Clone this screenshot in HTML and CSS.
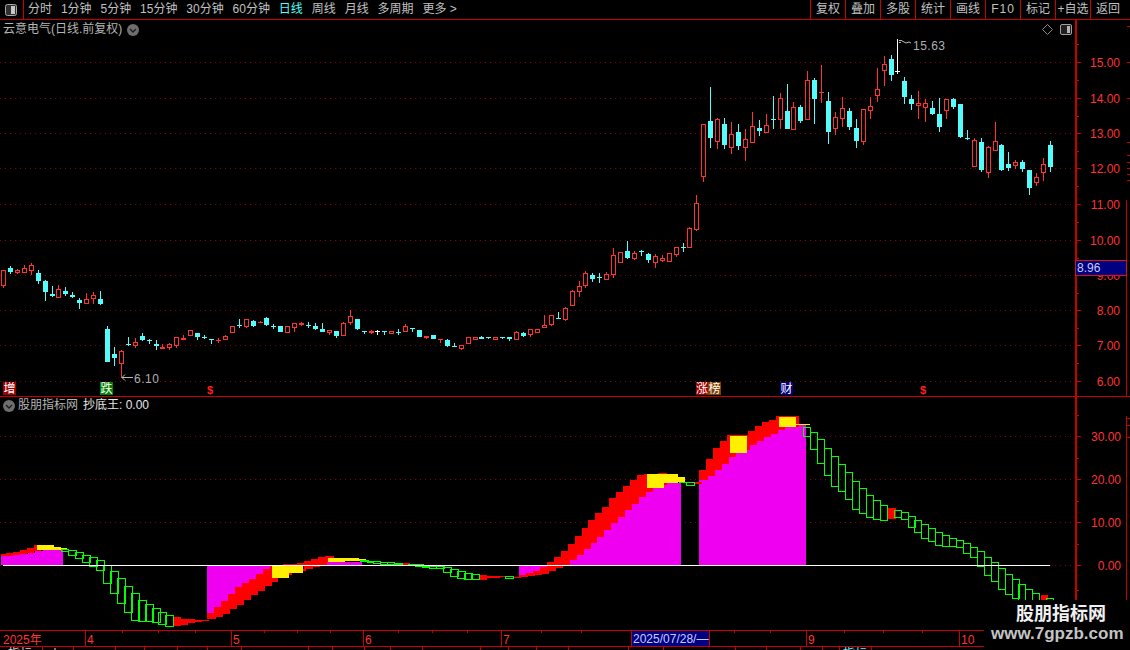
FILE: index.html
```html
<!DOCTYPE html>
<html lang="zh-CN">
<head>
<meta charset="utf-8">
<title>云意电气 K线</title>
<link rel="stylesheet" href="styles.css">
</head>
<body>
<div class="app">
  <header class="toolbar">
    <div class="layout-btn">
      <svg class="layout-icon" width="12" height="12" viewBox="0 0 12 12"><rect x="0.5" y="0.5" width="11" height="11" rx="2" fill="#303030" stroke="#a8a8a8"/><rect x="6" y="2" width="4" height="8" fill="#c8c8c8"/></svg>
    </div>
    <nav class="periods">
      <span>分时</span><span>1分钟</span><span>5分钟</span><span>15分钟</span><span>30分钟</span><span>60分钟</span><span class="active">日线</span><span>周线</span><span>月线</span><span>多周期</span><span>更多 &gt;</span>
    </nav>
    <nav class="tools">
      <span>复权</span><span>叠加</span><span>多股</span><span>统计</span><span>画线</span><span class="wide">F10</span><span>标记</span><span>+自选</span><span>返回</span>
    </nav>
  </header>

  <section class="pane pane-main">
    <svg id="main-chart" class="chart" width="1130" height="376" viewBox="0 20 1130 376"></svg>
    <div class="pane-title">
      <span class="stock">云意电气(日线.前复权)</span>
      <svg class="chev" width="12" height="12" viewBox="0 0 12 12"><circle cx="6" cy="6" r="6" fill="#6e6e6e"/><path d="M3 5l3 3 3-3" fill="none" stroke="#1c1c1c" stroke-width="1.4"/></svg>
    </div>
    <div class="pane-tools">
      <svg width="11" height="11" viewBox="0 0 11 11"><path d="M5.5 0.5l5 5-5 5-5-5z" fill="none" stroke="#8c8c8c"/></svg>
      <svg width="12" height="11" viewBox="0 0 12 11"><rect x="0.5" y="0.5" width="11" height="10" rx="1.5" fill="#202020" stroke="#a0a0a0"/><rect x="7" y="2" width="3" height="7" fill="#b4b4b4"/></svg>
    </div>
  </section>

  <section class="pane pane-sub">
    <svg id="sub-chart" class="chart" width="1130" height="233" viewBox="0 397 1130 233"></svg>
    <div class="pane-title sub-title">
      <svg class="chev" width="12" height="12" viewBox="0 0 12 12"><circle cx="6" cy="6" r="6" fill="#6e6e6e"/><path d="M3 5l3 3 3-3" fill="none" stroke="#1c1c1c" stroke-width="1.4"/></svg>
      <span class="stock">股朋指标网</span>
      <span class="value">抄底王: 0.00</span>
    </div>
  </section>

  <section class="date-axis">
    <svg id="date-chart" class="chart" width="1130" height="15" viewBox="0 631 1130 15"></svg>
  </section>

  <section class="tabs">
    <svg id="tab-chart" class="chart" width="1130" height="3" viewBox="0 647 1130 3"></svg>
  </section>

  <aside class="watermark">
    <div class="wm-name">股朋指标网</div>
    <div class="wm-url">www.7gpzb.com</div>
  </aside>
</div>
<script src="chart.js"></script>
</body>
</html>
```

FILE: styles.css
```css
* { box-sizing: border-box; }
html, body { margin: 0; padding: 0; background: #000; }
body {
  width: 1130px;
  height: 650px;
  overflow: hidden;
  font-family: "Liberation Sans", "Noto Sans CJK SC", sans-serif;
  font-size: 12px;
  color: #c0c0c0;
}
.app {
  position: relative;
  width: 1130px;
  height: 650px;
  overflow: hidden;
  display: flex;
  flex-direction: column;
  background: #000;
}
.toolbar {
  flex: none;
  height: 20px;
  display: flex;
  border-bottom: 1px solid #c80000;
  line-height: 19px;
  white-space: nowrap;
}
.layout-btn {
  flex: none;
  width: 24px;
  display: flex;
  align-items: center;
  justify-content: center;
  border-right: 1px solid #c80000;
  padding-right: 1px;
}
.periods {
  display: flex;
  gap: 8.9px;
  padding-left: 4px;
}
.periods .active { color: #54fcfc; }
.tools {
  margin-left: auto;
  display: flex;
  padding-right: 5px;
}
.tools span {
  width: 35px;
  text-align: center;
  border-left: 1px solid #c80000;
}
.tools .wide { letter-spacing: 1px; }
.pane { position: relative; flex: none; }
.pane-main { height: 377px; border-bottom: 1px solid #c80000; }
.pane-sub { height: 234px; border-bottom: 1px solid #c80000; }
.chart { display: block; }
.chart text { font-family: "Liberation Sans", "Noto Sans CJK SC", sans-serif; font-size: 12px; }
.chart .lab { fill: #ff3232; }
.chart .note { fill: #b0b0b0; letter-spacing: 0.5px; }
.chart .badge { fill: #fff; font-size: 12px; text-anchor: middle; }
.chart .dollar { fill: #ff2020; font-size: 11px; font-weight: bold; text-anchor: middle; }
.chart .last { fill: #c8ccff; }
.chart .tabtxt { fill: #d0d0d0; }
.chart .tabcur { fill: #54fcfc; }
.pane-title {
  position: absolute;
  left: 3px;
  top: 1px;
  display: flex;
  align-items: center;
  gap: 5px;
  height: 17px;
  line-height: 17px;
}
.stock { color: #b4b4b4; }
.sub-title { top: 0; left: 3px; gap: 3px; }
.sub-title .value { color: #e6e6e6; margin-left: 2px; }
.pane-tools {
  position: absolute;
  left: 1042px;
  top: 4px;
  display: flex;
  gap: 7px;
  align-items: center;
}
.date-axis { flex: none; height: 16px; border-bottom: 1px solid #c80000; }
.tabs { flex: none; height: 3px; overflow: hidden; }
.watermark {
  position: absolute;
  left: 984px;
  top: 600px;
  width: 146px;
  height: 50px;
  background: #000;
  text-align: center;
}
.wm-name {
  font-size: 18px;
  font-weight: bold;
  color: #f0f0f0;
  line-height: 20px;
  padding: 4px 0 0 32px;
  text-align: left;
}
.wm-url {
  font-size: 17px;
  font-weight: bold;
  color: #c4c4c4;
  line-height: 20px;
  padding-left: 7px;
  text-align: left;
}
```

FILE: chart.js
```js
(function () {
  var NS = "http://www.w3.org/2000/svg";
  function el(parent, tag, attrs, txt) {
    var e = document.createElementNS(NS, tag);
    for (var k in attrs) e.setAttribute(k, attrs[k]);
    if (txt != null) e.textContent = txt;
    parent.appendChild(e);
    return e;
  }
  function box(svg, x, y, w, h, fill) {
    el(svg, "rect", { x: x, y: y, width: w, height: h, fill: fill, "shape-rendering": "crispEdges" });
  }
  var FRAME = "#c80000", GRID = "#8c0000", RED = "#ff3232", CYAN = "#54fcfc";

  function grid(svg, y) {
    el(svg, "line", { x1: 0, x2: 1075, y1: y + 0.5, y2: y + 0.5, stroke: GRID, "stroke-dasharray": "1 4", "shape-rendering": "crispEdges" });
  }

  /* ------- main pane ------- */
  var main = document.getElementById("main-chart");
  var prices = [[15, 62], [14, 98], [13, 133], [12, 168], [11, 204], [10, 240], [9, 275], [8, 310], [7, 345], [6, 381]];
  prices.forEach(function (p) { grid(main, p[1]); });

  // type, body top, body bottom, high, low (pixels)
  var K = [
    ["r",270,286,270,288],["c",268,272,266,274],["r",270,273,269,274],["r",268,273,265,273],["r",265,271,263,275],
    ["c",273,281,270,284],["c",281,292,280,301],["c",294,296,286,297],["r",289,298,285,298],["c",291,294,287,296],
    ["c",295,297,292,298],["c",300,303,298,309],["r",299,304,293,304],["r",295,299,292,304],["c",299,304,291,305],
    ["c",329,362,326,362],["c",354,358,347,366],["r",351,364,350,378],["c",344,345,337,346],["r",342,346,338,348],
    ["c",336,340,333,341],["c",340,341,339,344],["c",344,346,340,350],["f",347,349,344,349],["r",344,348,343,350],
    ["r",337,346,337,348],["f",338,340,335,340],["r",330,336,330,336],["c",333,337,333,340],["c",337,338,335,339],
    ["c",339,340,339,344],["f",340,341,338,343],["r",336,340,335,340],["r",326,333,326,333],["c",325,326,319,328],
    ["r",319,327,319,328],["c",321,326,320,327],["f",322,323,321,323],["c",318,325,317,326],["c",326,327,324,329],
    ["c",326,332,326,332],["r",326,333,326,333],["r",323,328,323,332],["r",323,325,322,326],["c",325,326,322,328],
    ["c",326,329,323,330],["c",329,332,323,332],["r",330,333,330,335],["c",331,336,331,338],["r",323,336,322,336],
    ["r",316,323,310,325],["c",319,329,319,330],["c",331,332,331,334],["f",331,333,330,334],["w",331,332,330,335],
    ["c",331,332,331,335],["r",331,334,331,334],["c",332,333,329,335],["r",326,332,324,332],["c",328,329,328,332],
    ["c",330,337,330,337],["f",336,338,336,339],["c",335,339,335,339],["f",339,340,339,343],["c",340,346,339,347],
    ["c",346,347,343,347],["r",345,349,345,350],["r",337,344,337,344],["r",337,340,337,340],["c",337,339,336,339],
    ["c",337,338,337,339],["r",337,340,337,340],["c",337,338,337,339],["c",337,339,337,341],["r",332,340,331,340],
    ["c",333,336,332,337],["r",329,335,329,337],["r",329,333,329,333],["r",325,328,315,328],["r",315,325,315,326],
    ["c",318,319,312,319],["r",308,320,307,321],["r",291,306,290,306],["r",286,292,281,297],["r",273,286,271,288],
    ["c",275,279,273,282],["c",277,278,273,283],["r",274,280,272,280],["r",255,275,248,278],["r",252,263,252,263],
    ["c",251,258,241,259],["r",253,259,251,260],["c",251,252,250,256],["c",254,260,253,263],["r",256,263,254,268],
    ["r",258,261,255,262],["r",253,262,253,262],["r",247,255,247,257],["c",247,248,243,252],["r",228,248,227,248],
    ["r",203,230,195,231],["r",124,177,124,182],["c",121,138,87,148],["r",119,142,118,149],["c",124,145,118,149],
    ["r",134,148,122,154],["c",132,146,124,150],["r",139,148,129,161],["r",126,143,112,143],["c",128,131,120,136],
    ["r",125,133,114,133],["c",119,120,96,129],["r",98,120,93,129],["c",111,129,84,129],["r",107,130,102,130],
    ["c",107,121,105,123],["r",80,120,71,120],["c",80,99,78,124],["f",92,93,65,103],["c",101,132,92,144],
    ["r",117,129,112,135],["r",108,119,97,127],["c",111,127,108,130],["c",128,141,119,148],["r",109,142,109,145],
    ["r",106,111,97,119],["r",89,96,68,102],["r",64,71,56,86],["c",59,75,55,81],["w",71,72,39,74],
    ["c",81,97,77,104],["c",99,104,95,110],["r",103,106,91,119],["r",103,108,99,122],["c",108,114,101,115],
    ["c",114,127,98,132],["r",99,111,99,119],["c",99,107,98,109],["c",104,137,104,138],["c",138,139,130,140],
    ["r",140,167,138,167],["c",142,170,138,172],["r",147,173,146,178],["r",141,151,122,151],["c",145,170,144,171],
    ["c",164,168,152,171],["r",162,166,160,169],["c",162,169,160,172],["c",170,188,170,195],["r",177,183,173,186],
    ["r",164,173,158,181],["c",145,167,141,172]
  ];
  K.forEach(function (k, i) {
    var x = Math.floor(3.5 + i * 6.934);
    var t = k[0], top = k[1], bot = k[2], hi = k[3], lo = k[4];
    var col = t === "c" ? CYAN : t === "w" ? "#ffffff" : RED;
    if (hi < top) box(main, x, hi, 1, top - hi, col);
    if (lo > bot) box(main, x, bot, 1, lo - bot, col);
    if (t === "r" && bot - top > 2) {
      el(main, "rect", { x: x - 1.5, y: top + 0.5, width: 4, height: bot - top - 1, fill: "#000", stroke: col, "shape-rendering": "crispEdges" });
    } else {
      box(main, x - 2, top, 5, Math.max(1, bot - top), col);
    }
  });

  // price flags
  var flag = "#b8b8b8";
  el(main, "path", { d: "M899 40.5h3M899 42.5h2M902 41l4 2 3-1 2 1", fill: "none", stroke: flag });
  el(main, "text", { x: 913, y: 50, "class": "note" }, "15.63");
  el(main, "path", { d: "M122 377.5h11M122 377.5l3-3M122 377.5l3 3", fill: "none", stroke: flag });
  el(main, "text", { x: 134, y: 383, "class": "note" }, "6.10");

  // event badges
  function badge(x, w, txt, bg) {
    box(main, x, 382, w, 13, bg);
    el(main, "text", { x: x + w / 2, y: 393, "class": "badge" }, txt);
  }
  badge(3, 13, "增", "#a00000");
  badge(100, 13, "跌", "#008000");
  badge(696, 12, "涨", "#a00000");
  badge(708, 13, "榜", "#804000");
  badge(780, 13, "财", "#000080");
  el(main, "text", { x: 210, y: 394, "class": "dollar" }, "$");
  el(main, "text", { x: 923, y: 394, "class": "dollar" }, "$");

  // axis
  box(main, 1075, 20, 2, 376, FRAME);
  box(main, 1126, 200, 1, 196, FRAME);
  prices.forEach(function (p) {
    box(main, 1077, p[1], 4, 1, FRAME);
    box(main, 1077, p[1] + 18, 2, 1, FRAME);
    el(main, "text", { x: 1120, y: p[1] + 5, "text-anchor": "end", "class": "lab" }, p[0].toFixed(2));
  });
  box(main, 1077, 44, 2, 1, FRAME);
  [142, 155, 162, 168, 174, 180].forEach(function (y) { box(main, 1127, y, 3, 1, FRAME); });
  [26, 62, 98].forEach(function (y) { box(main, 1127, y, 3, 1, FRAME); });
  el(main, "rect", { x: 1075.5, y: 260.5, width: 51, height: 15, fill: "#000080", stroke: "#e01010", "shape-rendering": "crispEdges" });
  el(main, "text", { x: 1077, y: 272, "class": "last" }, "8.96");

  /* ------- sub pane ------- */
  var sub = document.getElementById("sub-chart");
  [[30, 436], [20, 479], [10, 522], [0, 565]].forEach(function (p) {
    grid(sub, p[1]);
    box(sub, 1077, p[1], 4, 1, FRAME);
    el(sub, "text", { x: 1121, y: p[1] + 5, "text-anchor": "end", "class": "lab" }, p[0].toFixed(2));
  });
  [415, 458, 501, 544, 590].forEach(function (y) { box(sub, 1077, y, 2, 1, FRAME); });
  box(sub, 1075, 397, 2, 233, FRAME);
  box(sub, 1126, 416, 1, 190, FRAME);
  [418, 425, 437].forEach(function (y) { box(sub, 1127, y, 3, 1, FRAME); });

  // zoom-grid helper: [x1, x2, y1, y2] at 1/3 px from an origin
  function fills(ox, oy, list, col) {
    list.forEach(function (r) {
      var x1 = Math.round(ox + r[0] / 3), x2 = Math.round(ox + r[1] / 3);
      var y1 = Math.round(oy + r[2] / 3), y2 = Math.round(oy + r[3] / 3);
      box(sub, x1, y1, x2 - x1, Math.max(1, y2 - y1), col);
    });
  }
  function hollow(ox, oy, list, col) {
    list.forEach(function (r) {
      var x1 = Math.round(ox + r[0] / 3), x2 = Math.round(ox + r[1] / 3);
      var y1 = Math.round(oy + r[2] / 3), y2 = Math.round(oy + r[3] / 3);
      if (y2 - y1 < 2) { box(sub, x1, y1, x2 - x1, 1, col); return; }
      el(sub, "rect", { x: x1 + 0.5, y: y1 + 0.5, width: x2 - x1 - 1, height: y2 - y1 - 1, fill: "none", stroke: col, "shape-rendering": "crispEdges" });
    });
  }
  var MAG = "#f000f0", RD = "#ff0000", YEL = "#fff000", GRN = "#00ff00";

  // magenta columns
  fills(0, 530, [[3,40,78,106],[40,60,75,106],[60,85,72,106],[85,105,69,106],[105,130,63,106],[130,189,60,106],
    [621,642,106,249],[642,663,106,231],[663,684,106,213],[684,705,106,192],[705,726,106,171],[726,747,106,159],[747,768,106,147],[768,789,106,132],[789,810,106,117]], MAG);
  fills(280, 530, [[141,246,96,106],[717,738,106,135],[738,759,106,129],[759,780,106,123],[780,800,106,111]], MAG);
  fills(540, 400, [[90,111,480,496],[111,132,465,496],[132,153,447,496],[153,171,429,496],[171,192,411,496],[192,213,390,496],[213,234,369,496],[234,255,351,496],[255,276,330,496],[276,297,312,496],[297,318,291,496],[318,339,276,496],[339,372,264,496],[372,381,255,496],[381,423,249,496],
    [477,504,240,496],[504,525,228,496],[525,546,210,496],[546,567,192,496],[567,588,171,496],[588,609,159,496],[609,630,150,496],[630,651,135,496],[651,672,123,496],[672,693,111,496],[693,714,102,496],[714,735,90,496],[735,768,81,496],[768,798,75,496]], MAG);

  // red bars
  fills(0, 530, [[3,17,72,78],[17,39,69,78],[39,60,66,75],[60,81,60,72],[81,102,54,69],[102,123,45,63],
    [521,543,261,288],[543,564,267,285],[564,585,267,279],[585,606,270,276],[606,627,270,273],
    [621,648,249,267],[642,669,231,261],[663,690,213,252],[684,711,192,237],[705,732,171,225],[726,753,159,210],[747,774,147,195],[768,795,132,183],[789,816,117,168],[810,834,105,156]], RD);
  fills(280, 530, [[27,36,129,135],[9,50,102,106],[51,72,99,105],[69,78,117,123],[72,99,93,117],[93,120,87,111],[114,141,81,105],[135,162,78,96],
    [369,390,100,104],[600,621,135,150],[621,660,138,144],[660,675,138,141],[702,723,141,144],
    [717,744,135,141],[738,765,129,138],[759,786,123,135],[780,807,111,132]], RD);
  fills(540, 400, [[0,27,505,522],[21,48,486,513],[42,69,471,504],[63,90,453,495],[84,111,432,480],[105,132,408,465],[126,153,384,447],[144,171,360,429],[165,192,339,411],[186,213,321,390],[207,234,294,369],[228,255,276,351],[249,276,258,330],[270,297,240,312],[291,318,225,291],[312,339,222,276],[354,381,219,255],
    [465,486,246,252],
    [477,504,210,240],[498,525,177,228],[519,546,144,210],[540,567,123,192],[561,588,105,171],[582,609,105,159],[603,630,105,150],[624,651,93,135],[645,672,78,123],[666,693,66,111],[687,714,60,102],[708,735,48,90],[735,777,48,81]], RD);
  fills(800, 400, [[265,288,324,357],[723,744,586,600]], RD);

  // yellow
  fills(0, 530, [[111,162,45,60],[162,183,51,60],[183,201,54,60],[816,840,108,144]], YEL);
  fills(280, 530, [[0,27,108,144],[27,69,108,129],[144,195,84,96],[195,237,84,93],[237,258,87,93]], YEL);
  fills(540, 400, [[321,372,222,264],[372,414,222,249],[414,435,231,246],[570,621,108,159],[717,768,51,81],[768,810,72,74]], YEL);

  // green hollow bars
  hollow(0, 530, [[183,208,57,66],[204,230,60,77],[225,251,66,88],[246,272,75,99],[267,293,81,111],[288,314,90,123],[309,335,106,161],[330,356,123,191],[351,377,145,221],[372,398,168,248],[393,419,189,272],[414,440,210,275],[435,461,222,276],[456,482,234,278],[474,500,246,284],[495,521,255,290]], GRN);
  hollow(280, 530, [[240,267,90,96],[261,282,93,99],[279,304,94,102],[300,325,97,105],[321,346,97,105],[345,369,99,104],[384,432,102,106],[405,429,105,110],[426,450,108,114],[447,471,108,117],[468,495,108,117],[489,516,111,129],[510,537,117,141],[531,558,123,147],[552,579,129,150],[573,600,132,150],[675,702,138,147]], GRN);
  hollow(540, 400, [[417,444,245,248],[438,465,246,257]], GRN);
  hollow(800, 400, [[10,34,82,112],[31,55,97,151],[52,76,118,193],[73,97,145,229],[94,118,169,262],[115,139,193,277],[136,160,217,301],[157,181,244,331],[178,202,265,343],[199,223,286,355],[220,244,301,361],[241,265,316,364],[283,307,331,355],[304,328,337,361],[325,349,349,385],[343,367,361,400],[364,388,373,418],[385,409,385,427],[406,430,397,439],[427,451,406,442],[448,472,415,442],[469,493,421,445],[490,514,430,463],[511,535,442,475],[532,556,454,502],[553,577,472,529],[574,598,487,547],[595,619,505,571],[616,640,523,586],[637,661,538,598],[655,679,553,610],[676,700,568,640],[697,721,580,660],[739,763,595,670]], GRN);

  // zero line
  box(sub, 3, 565, 1047, 1, "#ffffff");

  /* ------- date axis ------- */
  var dt = document.getElementById("date-chart");
  [85, 231, 363, 501, 806, 959].forEach(function (x) { box(dt, x, 631, 1, 15, FRAME); });
  [122, 158, 195, 264, 297, 330, 398, 432, 467, 541, 581, 734, 770, 844, 883, 922].forEach(function (x) { box(dt, x, 631, 1, 2, FRAME); });
  [["2025年", 3], ["4", 87], ["5", 233], ["6", 365], ["7", 503], ["9", 808], ["10", 961]].forEach(function (l) {
    el(dt, "text", { x: l[1], y: 644, "class": "lab" }, l[0]);
  });
  el(dt, "rect", { x: 631.5, y: 630.5, width: 78, height: 16, fill: "#000080", stroke: FRAME, "shape-rendering": "crispEdges" });
  el(dt, "text", { x: 633, y: 643, "class": "last" }, "2025/07/28/—");

  /* ------- clipped tab row ------- */
  var tb = document.getElementById("tab-chart");
  [42, 73, 115, 144, 177, 207, 241, 308, 332, 364, 390, 422, 480, 508, 536, 568, 628, 663, 735, 766, 800, 822, 839, 871].forEach(function (x) {
    box(tb, x, 647, 1, 3, FRAME);
  });
  el(tb, "text", { x: 8, y: 658, "class": "tabtxt" }, "指标");
  el(tb, "text", { x: 50, y: 658, "class": "tabtxt" }, "卜");
  el(tb, "text", { x: 843, y: 658, "class": "tabcur" }, "指标");
})();
```
